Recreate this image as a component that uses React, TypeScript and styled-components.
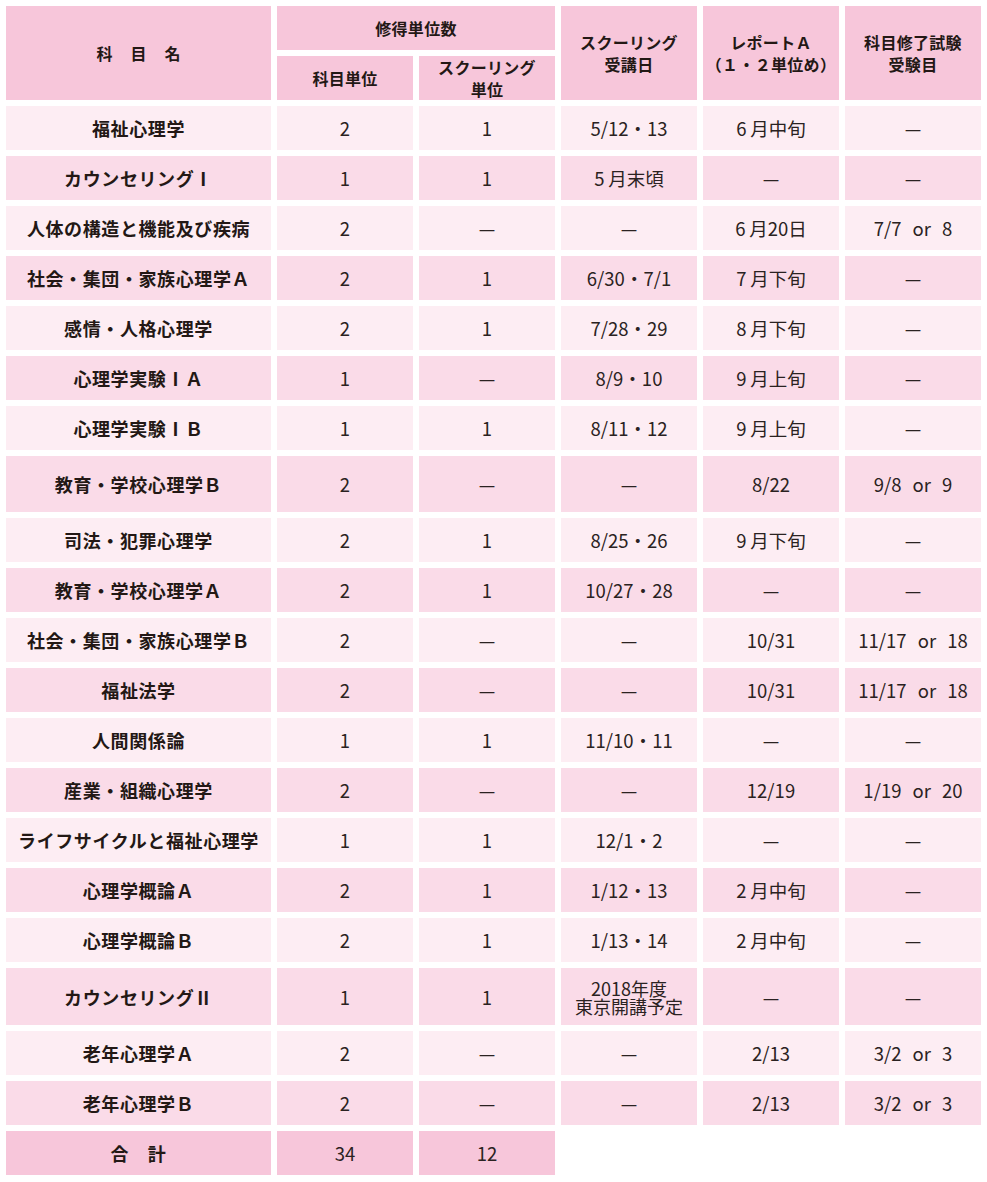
import React from "react";
import styled, { createGlobalStyle } from "styled-components";

type Tone = "head" | "light" | "mid";

const GlobalStyle = createGlobalStyle`
  html, body {
    margin: 0;
    padding: 0;
    background: #ffffff;
  }
  body {
    font-family: "Noto Sans CJK JP", "Noto Sans", sans-serif;
    color: #231815;
  }
`;

const tones: Record<Tone, string> = {
  head: "#f7c6da",
  light: "#fdedf3",
  mid: "#fadbe8",
};

const Page = styled.div`
  width: 987px;
  padding: 6px;
  box-sizing: border-box;
`;

const Table = styled.div`
  display: grid;
  grid-template-columns: 265px repeat(5, 136px);
  grid-auto-rows: minmax(44px, auto);
  gap: 6px;
`;

const Cell = styled.div<{ $tone: Tone; $h?: number; $span?: number; $rows?: number }>`
  display: flex;
  align-items: center;
  justify-content: center;
  text-align: center;
  background: ${(p) => tones[p.$tone]};
  min-height: ${(p) => (p.$h ? `${p.$h}px` : "44px")};
  grid-column: ${(p) => (p.$span ? `span ${p.$span}` : "auto")};
  grid-row: ${(p) => (p.$rows ? `span ${p.$rows}` : "auto")};
  box-sizing: border-box;
`;

const HeadText = styled.span<{ $spread?: number }>`
  font-family: "Noto Sans CJK JP", sans-serif;
  font-weight: 700;
  font-size: 16px;
  line-height: 22px;
  letter-spacing: ${(p) => (p.$spread ? `${p.$spread}px` : "0.3px")};
  margin-right: ${(p) => (p.$spread ? `-${p.$spread}px` : "0")};
  white-space: pre-line;
`;

const Subject = styled.span`
  font-family: "Noto Sans CJK JP", sans-serif;
  font-weight: 700;
  font-size: 18px;
  letter-spacing: 0.6px;
  white-space: nowrap;
`;

const Value = styled.span<{ $small?: boolean }>`
  font-family: "Noto Sans CJK JP", sans-serif;
  font-weight: 400;
  font-size: ${(p) => (p.$small ? "18px" : "18.5px")};
  line-height: ${(p) => (p.$small ? "18px" : "22px")};
  word-spacing: 7px;
  white-space: pre-line;
  color: #2a2221;
`;

type Row = { name: string; cells: string[]; h?: number };

const rows: Row[] = [
  { name: "福祉心理学", cells: ["2", "1", "5/12・13", "6\u2009月中旬", "—"] },
  { name: "カウンセリングⅠ", cells: ["1", "1", "5\u2009月末頃", "—", "—"] },
  { name: "人体の構造と機能及び疾病", cells: ["2", "—", "—", "6\u2009月20日", "7/7 or 8"] },
  { name: "社会・集団・家族心理学Ａ", cells: ["2", "1", "6/30・7/1", "7\u2009月下旬", "—"] },
  { name: "感情・人格心理学", cells: ["2", "1", "7/28・29", "8\u2009月下旬", "—"] },
  { name: "心理学実験ⅠＡ", cells: ["1", "—", "8/9・10", "9\u2009月上旬", "—"] },
  { name: "心理学実験ⅠＢ", cells: ["1", "1", "8/11・12", "9\u2009月上旬", "—"] },
  { name: "教育・学校心理学Ｂ", cells: ["2", "—", "—", "8/22", "9/8 or 9"], h: 56 },
  { name: "司法・犯罪心理学", cells: ["2", "1", "8/25・26", "9\u2009月下旬", "—"] },
  { name: "教育・学校心理学Ａ", cells: ["2", "1", "10/27・28", "—", "—"] },
  { name: "社会・集団・家族心理学Ｂ", cells: ["2", "—", "—", "10/31", "11/17 or 18"] },
  { name: "福祉法学", cells: ["2", "—", "—", "10/31", "11/17 or 18"] },
  { name: "人間関係論", cells: ["1", "1", "11/10・11", "—", "—"] },
  { name: "産業・組織心理学", cells: ["2", "—", "—", "12/19", "1/19 or 20"] },
  { name: "ライフサイクルと福祉心理学", cells: ["1", "1", "12/1・2", "—", "—"] },
  { name: "心理学概論Ａ", cells: ["2", "1", "1/12・13", "2\u2009月中旬", "—"] },
  { name: "心理学概論Ｂ", cells: ["2", "1", "1/13・14", "2\u2009月中旬", "—"] },
  { name: "カウンセリングⅡ", cells: ["1", "1", "2018年度\n東京開講予定", "—", "—"], h: 57 },
  { name: "老年心理学Ａ", cells: ["2", "—", "—", "2/13", "3/2 or 3"] },
  { name: "老年心理学Ｂ", cells: ["2", "—", "—", "2/13", "3/2 or 3"] },
];

export default function App() {
  return (
    <Page>
      <GlobalStyle />
      <Table>
        <Cell $tone="head" $rows={2}>
          <HeadText $spread={1}>科　目　名</HeadText>
        </Cell>
        <Cell $tone="head" $span={2}>
          <HeadText>修得単位数</HeadText>
        </Cell>
        <Cell $tone="head" $rows={2}>
          <HeadText>{"スクーリング\n受講日"}</HeadText>
        </Cell>
        <Cell $tone="head" $rows={2}>
          <HeadText>{"レポートＡ\n（１・２単位め）"}</HeadText>
        </Cell>
        <Cell $tone="head" $rows={2}>
          <HeadText>{"科目修了試験\n受験目"}</HeadText>
        </Cell>
        <Cell $tone="head">
          <HeadText>科目単位</HeadText>
        </Cell>
        <Cell $tone="head">
          <HeadText>{"スクーリング\n単位"}</HeadText>
        </Cell>

        {rows.map((row, i) => {
          const tone: Tone = i % 2 === 0 ? "light" : "mid";
          return (
            <React.Fragment key={row.name}>
              <Cell $tone={tone} $h={row.h}>
                <Subject>{row.name}</Subject>
              </Cell>
              {row.cells.map((c, j) => (
                <Cell key={j} $tone={tone} $h={row.h}>
                  <Value $small={c.includes("\n")}>{c}</Value>
                </Cell>
              ))}
            </React.Fragment>
          );
        })}

        <Cell $tone="head">
          <Subject>合　計</Subject>
        </Cell>
        <Cell $tone="head">
          <Value>34</Value>
        </Cell>
        <Cell $tone="head">
          <Value>12</Value>
        </Cell>
      </Table>
    </Page>
  );
}
